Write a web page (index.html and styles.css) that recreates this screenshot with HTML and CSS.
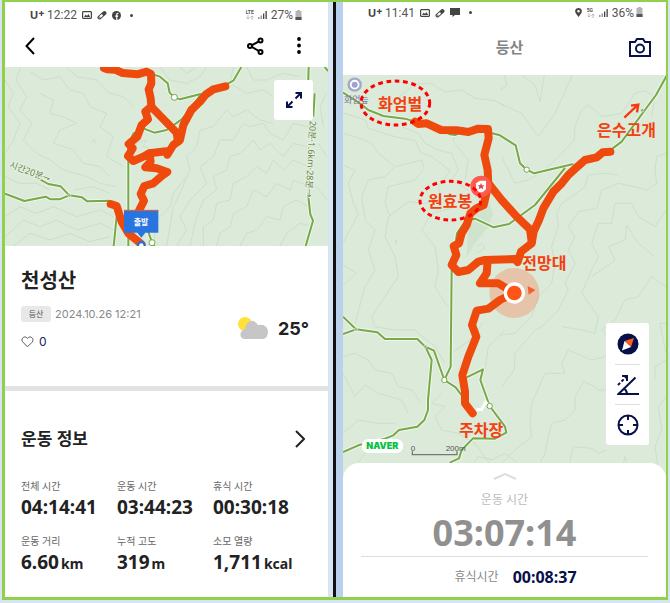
FILE: index.html
```
<!DOCTYPE html>
<html lang="ko">
<head>
  <meta charset="UTF-8">
  <meta name="viewport" content="width=device-width, initial-scale=1">
  <title>천성산 등산 기록</title>
  <link rel="stylesheet" href="styles.css">
</head>
<body>
  <svg width="0" height="0" class="defs" aria-hidden="true">
    <symbol id="i-picture" viewBox="0 0 10 10">
      <path fill="#444" fill-rule="evenodd" d="M1 1h8l1 1v6l-1 1H1L0 8V2zM1.200 2.200v5.600h7.600V2.200zM2 7l1.800-2.600L5 6l1.400-2L8.200 7z"/>
    </symbol>
    <symbol id="i-pill" viewBox="0 0 10 10">
      <path d="M2.500 7.500l5-4.500" stroke="#444" stroke-width="4" stroke-linecap="round"/>
      <path d="M2.800 7.200l2-1.800" stroke="#fff" stroke-width="2.200" stroke-linecap="round"/>
      <path d="M2.400 7.800l1-1" stroke="#777" stroke-width="1.400"/>
    </symbol>
    <symbol id="i-signal" viewBox="0 0 9 10">
      <path fill="#999" d="M0 7h1.500v2H0zM2.500 5.500H4V9H2.500z"/>
      <path fill="#444" d="M5 3.500h1.300V9H5zM7.500 1h1.300v8H7.500z"/>
    </symbol>
    <symbol id="i-battery" viewBox="0 0 7 11">
      <path fill="#b5b5b5" d="M2 0h3v1h1.500v9h-6V1H2z"/>
      <path fill="#555" d="M.5 7h6v3h-6z"/>
    </symbol>
    <symbol id="i-updown" viewBox="0 0 8 5">
      <path d="M2 0v4M.5 2.500L2 4l1.500-1.500M6 5V1M4.500 2.500L6 1l1.500 1.500" fill="none" stroke="#aaa" stroke-width=".8"/>
    </symbol>
  </svg>

  <main class="board">
    <section class="phone summary">
      <div class="status">
        <b class="carrier">U<sup>+</sup></b>
        <span>12:22</span>
        <svg class="ic" width="10" height="10"><use href="#i-picture"/></svg>
        <svg class="ic" width="10" height="10"><use href="#i-pill"/></svg>
        <svg class="ic" width="9" height="9" viewBox="0 0 10 10">
          <circle cx="5" cy="5" r="5" fill="#444"/>
          <path d="M5.300 10V4q0-1.600 1.900-1.500M3.500 5.600h3.400" fill="none" stroke="#fff" stroke-width="1.300"/>
        </svg>
        <i class="dot"></i>
        <span class="net">LTE<svg width="8" height="5"><use href="#i-updown"/></svg></span>
        <svg width="9" height="10"><use href="#i-signal"/></svg>
        <span class="charge">27%<svg width="7" height="11"><use href="#i-battery"/></svg></span>
      </div>

      <header class="topbar">
        <button class="icon-btn" aria-label="뒤로">
          <svg width="10" height="18" viewBox="0 0 10 18"><path d="M9 1L1.500 9 9 17" fill="none" stroke="#000" stroke-width="2"/></svg>
        </button>
        <button class="icon-btn share" aria-label="공유">
          <svg width="17" height="18" viewBox="0 0 17 18" fill="#fff" stroke="#000" stroke-width="2">
            <path d="M13.500 3.500L3.500 9l10 6"/>
            <circle cx="13.500" cy="3.500" r="2"/><circle cx="3" cy="9" r="2"/><circle cx="13.500" cy="15" r="2"/>
          </svg>
        </button>
        <button class="icon-btn" aria-label="더보기">
          <svg width="4" height="17" viewBox="0 0 4 17"><circle cx="2" cy="2" r="1.900"/><circle cx="2" cy="8.500" r="1.900"/><circle cx="2" cy="15" r="1.900"/></svg>
        </button>
      </header>

      <div class="map map-small">
        <svg class="canvas" viewBox="15 21 969 537" preserveAspectRatio="xMidYMin slice">
          <g class="contour">
            <path d="M62 21L48 60 80 110 60 150 96 190 70 240 110 280 150 300 190 330 260 350 300 370 350 380"/>
            <path d="M15 60L40 100 24 140 60 190 40 240 15 280"/>
            <path d="M90 35L130 60 180 50 210 90 250 100 270 140 320 160 300 200 340 230 320 290 370 320"/>
            <path d="M120 100L160 120 150 160 190 170 230 190 180 210 160 250 220 270 250 310 300 320 330 350"/>
            <path d="M200 21L230 50 290 60 330 100 370 110 400 140"/>
            <path d="M280 240L290 250M285 235L275 250"/>
            <path d="M400 280L410 250 440 240 430 260 445 262"/>
            <path d="M480 21L510 60 560 70 600 50 620 21M540 21L560 40 590 21"/>
            <path d="M700 21L690 70 740 100 790 90 820 110M740 21L760 60 800 60 850 40 900 50"/>
            <path d="M820 190L780 180 740 150 700 170 680 150 640 200 600 210 590 260 560 290 570 330 540 400 520 440 500 558"/>
            <path d="M925 200L880 190 850 240 810 220 790 190 750 200 730 190 700 240 660 240 640 290 600 320 620 370 570 420 540 470 560 510 530 558"/>
            <path d="M920 260L880 250 850 290 810 250 780 270 760 240 720 280 690 290 680 330 640 350 650 390 610 420 590 470 570 558"/>
            <path d="M925 320L880 300 850 330 820 300 800 340 770 320 740 350 700 370 690 420 650 430 640 480 610 500 610 558"/>
            <path d="M930 380L880 360 870 390 830 370 800 410 760 390 740 440 700 460 690 500 660 520 650 558"/>
            <path d="M925 440L890 420 850 440 840 480 800 470 770 510 740 520 720 558M940 500L900 490 860 520 840 558M980 100L960 140 970 200M955 250L981 290M950 380L981 420"/>
            <path d="M15 470L60 440 110 460 160 440 230 470 300 450 340 470M15 530L70 480 120 500 170 480 230 510 300 490 340 510M40 558L90 520 150 540 210 520 270 545 330 530"/>
            <path d="M15 350L60 370 110 370 150 390M220 390L280 380 330 400"/>
            <path d="M460 558L470 480 510 440 520 400 560 350"/>
          </g>
          <g class="trail halo">
            <path d="M455 42L480 50 503 70 509 98 523 112 540 118 605 101"/>
            <path d="M670 78L700 62 724 21"/>
            <path d="M385 558V255L400 220 430 205 463 218 500 210 545 178 605 101"/>
            <path d="M120 358L145 372 182 379 208 406M15 401L73 423 137 410 152 418H178L208 406 246 412 262 424 330 422 352 450 341 558M440 500L456 548 464 558"/>
            <path d="M926 21L924 90M944 100L940 170M924 400L931 463 939 482 917 558M974 21L984 33"/>
          </g>
          <g class="trail">
            <path d="M455 42L480 50 503 70 509 98 523 112 540 118 605 101"/>
            <path d="M670 78L700 62 724 21"/>
            <path d="M385 558V255L400 220 430 205 463 218 500 210 545 178 605 101"/>
            <path d="M120 358L145 372 182 379 208 406M15 401L73 423 137 410 152 418H178L208 406 246 412 262 424 330 422 352 450 341 558M440 500L456 548 464 558"/>
            <path d="M926 21L924 90M944 100L940 170M924 400L931 463 939 482 917 558M974 21L984 33"/>
          </g>
          <circle class="node" cx="523" cy="112" r="9"/>
          <circle class="node" cx="456" cy="548" r="9"/>
          <circle class="joint" cx="208" cy="406" r="5"/>
          <text class="trail-name" transform="translate(26 322) rotate(20)">시간20분⇁</text>
          <text class="trail-name" transform="translate(929 182) rotate(93)">20분·1.6km·28분→</text>
          <g class="route">
            <path d="M312 24L322 28 345 29 368 39 412 43 440 35 453 42 454 70 446 88 452 115 454 140 436 155 444 178 425 195 412 230 386 252 398 265 384 288 400 303 430 290 448 280 498 274 502 284 520 255 540 240 550 195 574 150 600 125 618 103 640 88 676 79"/>
            <path d="M454 140L530 218 534 245M448 280L452 305 436 322 470 325 502 336 488 346 460 370 433 378 422 402 432 422 418 450 405 480"/>
            <path d="M332 432L350 438 365 485 385 520 424 552"/>
          </g>
          <circle cx="424" cy="556" r="10" fill="#fff" stroke="#2a6fd6" stroke-width="7"/>
          <path d="M372 451h103v67h-39l-12 15-12-15h-40z" fill="#2874e0"/>
          <path d="M372 451h103" stroke="#f2552c" stroke-width="3"/>
          <text class="start-name" x="423" y="496">출발</text>
        </svg>
        <button class="expand" aria-label="지도 확대">
          <svg width="18" height="18" viewBox="0 0 18 18" fill="none" stroke="#07104a" stroke-width="2">
            <path d="M10.500 2H16v5.500M15.500 2.500L10.500 7.500M7.500 16H2v-5.500M2.500 15.500l5-5"/>
          </svg>
        </button>
      </div>

      <div class="info">
        <div>
          <h1>천성산</h1>
          <p class="meta"><span class="tag">등산</span><time>2024.10.26 12:21</time></p>
          <button class="like">
            <svg width="13" height="12" viewBox="0 0 13 12"><path d="M6.500 10.800L2 6.300C-.5 3.500 2.200.3 4.800 1.100q1 .3 1.700 1.400Q7.200 1.400 8.200 1.100c2.600-.8 5.300 2.400 2.800 5.200z" fill="none" stroke="#555"/></svg>
            0
          </button>
        </div>
        <div class="weather">
          <svg width="30" height="24" viewBox="0 0 30 24">
            <circle cx="7" cy="8" r="7" fill="#ffe13a"/>
            <path d="M6 23q-4-1-3.500-5T7 13q0-5 4.500-7.500T20 9q8-1.500 10 5.500 0 8-5 8.500z" fill="#c6c6c6"/>
          </svg>
          <span>25°</span>
        </div>
      </div>

      <section class="workout">
        <a href="#" class="workout-head">
          <h2>운동 정보</h2>
          <svg width="10" height="18" viewBox="0 0 10 18"><path d="M1 1l8 8-8 8" fill="none" stroke="#222" stroke-width="2"/></svg>
        </a>
        <dl class="stats">
          <div><dt>전체 시간</dt><dd>04:14:41</dd></div>
          <div><dt>운동 시간</dt><dd>03:44:23</dd></div>
          <div><dt>휴식 시간</dt><dd>00:30:18</dd></div>
          <div><dt>운동 거리</dt><dd>6.60<small>km</small></dd></div>
          <div><dt>누적 고도</dt><dd>319<small>m</small></dd></div>
          <div><dt>소모 열량</dt><dd>1,711<small>kcal</small></dd></div>
        </dl>
      </section>
    </section>

    <div class="gutter"></div>

    <section class="phone tracking">
      <div class="status">
        <b class="carrier">U<sup>+</sup></b>
        <span>11:41</span>
        <svg class="ic" width="10" height="10"><use href="#i-picture"/></svg>
        <svg class="ic" width="10" height="10"><use href="#i-pill"/></svg>
        <svg class="ic" width="10" height="9" viewBox="0 0 10 9"><path d="M0 0h10v7H5L2.500 9V7H0z" fill="#444"/></svg>
        <i class="dot"></i>
        <svg class="pin" width="7" height="9" viewBox="0 0 7 9"><path fill-rule="evenodd" d="M3.500 9L.6 5Q-.6 2 1.500.6q2-1.200 4 0Q7.600 2 6.400 5zM3.500 2a1.300 1.300 0 100 2.600 1.300 1.300 0 000-2.600z" fill="#444"/></svg>
        <span class="net">5G<svg width="8" height="5"><use href="#i-updown"/></svg></span>
        <svg width="9" height="10"><use href="#i-signal"/></svg>
        <span class="charge">36%<svg width="7" height="11"><use href="#i-battery"/></svg></span>
      </div>

      <header class="topbar">
        <h2>등산</h2>
        <button class="icon-btn camera" aria-label="사진 찍기">
          <svg width="22" height="19" viewBox="0 0 22 19" fill="none" stroke="#07104a" stroke-width="2">
            <path d="M1 4h5l2-3h6l2 3h5v14H1z"/><circle cx="11" cy="10.500" r="4"/>
          </svg>
        </button>
      </header>

      <div class="map map-live">
        <svg class="canvas" viewBox="24 15 969 1212" preserveAspectRatio="xMidYMin slice">
          <g class="contour">
            <path d="M170 100L240 42 290 40 330 66 380 60 420 85 480 92 510 110M508 15L516 45 495 60M560 15L600 45 615 95 628 15M495 100L560 130 610 200 660 130 712 15M740 120L760 104 800 140 860 130 900 70 930 62 960 80 950 140"/>
            <path d="M740 120L720 170 718 210 680 250 630 300 580 330 540 340 515 290 500 260"/>
            <path d="M24 128L90 150 100 175 180 200 240 212 260 250 290 260 345 302 310 350 320 390 270 400 220 395 160 440 150 500 180 560 190 620 150 680 110 740 120 770 180 780 240 780 300 830 330 880"/>
            <path d="M24 190L60 200 110 220 130 250 180 290 150 320 100 330 80 380 90 450 120 480 100 540 120 600 90 650 60 760"/>
            <path d="M200 170L250 190 270 220 310 240 350 250 370 300 350 330 400 360M360 190L355 215 375 240 400 270 390 330"/>
            <path d="M24 285L60 300 40 340 55 400 70 430 45 480 24 520M24 585L65 610 24 645"/>
            <path d="M180 290L260 270 268 295 240 330 160 350 150 400 165 440M350 415L290 430 260 480 300 530 310 600 300 650 330 700 350 720"/>
            <path d="M180 510L188 520M185 508L182 522M425 530L440 518 450 535 430 548 420 540"/>
            <path d="M850 315L810 310 760 315 750 350 710 380 680 400 665 430 670 470 650 530 660 580 650 640 610 680 590 740 540 790 495 795"/>
            <path d="M993 250L965 260 960 300 965 340 935 360 900 350 850 340 800 360 785 415 730 425 700 470 720 500 700 540 720 580 690 640 700 660 670 720 640 750 620 770 600 780 540 850 538 900 500 950"/>
            <path d="M993 420L960 470 910 440 890 400 840 400 830 460 790 460 770 520 790 560 770 600 740 670 790 740 780 790 740 780 680 770"/>
            <path d="M960 560L910 520 875 465 870 510 820 530 840 570 800 600 770 620M993 650L950 620 910 680 870 690 840 750 800 780 850 830 810 860 770 870 700 840 680 880 690 910 630 910 590 1000 585 1060 590 1100 540 1140 500 1180"/>
            <path d="M815 960L790 960 770 945 745 935 720 980 720 1020 690 1050 650 1060 640 1100 630 1150 610 1190M993 760L975 760 985 810 993 850M993 870L960 890 960 930M993 980L970 1010 980 1080 960 1130 970 1200M815 1140L790 1150 770 1135 715 1130 700 1200M860 1200L870 1160 880 1200"/>
            <path d="M24 860L60 850 100 870 120 900 170 910 190 950 230 960 260 1000M24 910L60 980 90 945 130 970 200 990 220 1030M320 970L290 1000 330 1010 300 1040 320 1080 370 1090 420 1120 470 1190"/>
            <path d="M355 845L420 800 440 760M24 1090L70 1050 130 1060 180 1060M60 1190L90 1150M510 780L460 830 450 900"/>
            <path d="M400 1200L430 1160 470 1170 510 1150 560 1190"/>
          </g>
          <path d="M446 350L475 430 460 470 420 520 395 560 400 470z" fill="#d0e3cc"/>
          <g class="trail halo">
            <path d="M24 68L78 102 100 120 145 138 210 146 240 155"/>
            <path d="M466 188L495 196 542 226 555 280 575 299 598 310 715 282M820 245L860 215 963 75 996 15M340 192L360 195 385 185M690 294L600 405 522 462 476 472 420 446 390 454 366 490 350 600 347 890 328 930"/>
            <path d="M24 740L63 778 127 787 150 807H247L271 830 297 842 328 930 362 952 380 976M24 792L63 778M271 830L290 870 279 990V1020L268 1050 247 1070 192 1080 175 1096 150 1106 70 1126 24 1146M395 922L444 898 436 930 464 1008 510 1070 514 1088 480 1106 414 1105 380 1140 372 1165 344 1178"/>
          </g>
          <g class="trail">
            <path d="M24 68L78 102 100 120 145 138 210 146 240 155"/>
            <path d="M466 188L495 196 542 226 555 280 575 299 598 310 715 282M820 245L860 215 963 75 996 15M340 192L360 195 385 185M690 294L600 405 522 462 476 472 420 446 390 454 366 490 350 600 347 890 328 930"/>
            <path d="M24 740L63 778 127 787 150 807H247L271 830 297 842 328 930 362 952 380 976M24 792L63 778M271 830L290 870 279 990V1020L268 1050 247 1070 192 1080 175 1096 150 1106 70 1126 24 1146M395 922L444 898 436 930 464 1008 510 1070 514 1088 480 1106 414 1105 380 1140 372 1165 344 1178"/>
          </g>
          <path d="M424 1019L440 1018 452 997 462 1006" fill="none" stroke="#fff" stroke-width="9"/>
          <circle class="node" cx="575" cy="299" r="8"/>
          <circle class="node" cx="328" cy="930" r="8"/>
          <circle class="node" cx="464" cy="1008" r="8"/>
          <circle class="joint" cx="63" cy="778" r="5"/>
          <circle class="joint" cx="271" cy="830" r="5"/>
          <circle class="joint" cx="922" cy="121" r="5"/>
          <circle cx="59" cy="44" r="18" fill="#fff" stroke="#a3a7cd" stroke-width="7"/>
          <circle cx="59" cy="44" r="9" fill="#9ea3cf"/>
          <text class="place" x="27" y="99">화엄늪</text>

          <circle cx="538" cy="669" r="75" fill="#f28c62" opacity=".4"/>
          <g class="route">
            <path d="M240 155L250 162 275 160 318 180 365 181 400 186 430 176 459 177 461 205 448 255 458 300 460 345 446 405 424 415 406 430 395 465 380 490 372 520 356 528 364 555 350 585 370 606 400 600 430 575 450 570 540 567 548 576 558 545 590 520 596 485 612 450 625 415 655 365 680 340 700 315 722 295 750 270 785 262 803 247 826 245"/>
            <path d="M460 340L500 390 545 440 585 478 590 515M458 572L455 610 435 640 490 640 538 669 495 690 460 716 425 722 411 765 424 800 400 860 382 915 390 965 390 1000 413 1030"/>
          </g>
          <circle cx="538" cy="669" r="27" fill="#ff5518" stroke="#fff" stroke-width="10"/>
          <path d="M578 648l23 12-20 14z" fill="#f4602c"/>

          <circle cx="438" cy="349" r="32" fill="#fa5c50"/>
          <path d="M423 340L435 332H453V358L443 367H433L423 358z" fill="#fff"/>
          <path d="M438 339l3 7h7l-5 5 2 7-7-4-7 4 2-7-5-5h7z" fill="#e8443c"/>

          <ellipse class="mark" cx="181" cy="99" rx="103" ry="66"/>
          <ellipse class="mark" cx="346" cy="392" rx="91" ry="58"/>
          <path d="M868 143L905 108M888 107l22-3-4 23" fill="none" stroke="#f8380c" stroke-width="7"/>
          <text class="spot" x="129" y="119">화엄벌</text>
          <text class="spot" x="279" y="410">원효봉</text>
          <text class="spot" x="786" y="199">은수고개</text>
          <text class="spot" x="562" y="597">전망대</text>
          <text class="spot" x="372" y="1097">주차장</text>

          <rect x="80" y="1107" width="125" height="42" rx="21" fill="#fff"/>
          <text class="naver" x="142" y="1138">NAVER</text>
          <path d="M232 1144V1154H366V1144" fill="none" stroke="#777" stroke-width="4"/>
          <text class="scale" x="227" y="1143">0</text>
          <text class="scale" x="332" y="1143">200m</text>
        </svg>
        <div class="tools">
          <button aria-label="나침반">
            <svg width="22" height="22" viewBox="0 0 22 22"><circle cx="11" cy="11" r="10.500" fill="#07104a"/><path d="M17 5L7.500 8l6.500 6z" fill="#ff5a22"/><path d="M5 17.500L7.500 8l6.500 6z" fill="#fff"/></svg>
          </button>
          <button aria-label="경사">
            <svg width="22" height="22" viewBox="0 0 22 22" fill="none" stroke="#07104a" stroke-width="2"><path d="M22 20H1.500L18.500 3.500M7 14.500q3 2 3 5.500"/><path d="M1 11l8-8" stroke-dasharray="3 2"/><path d="M5 2h5v5"/></svg>
          </button>
          <button aria-label="현재 위치">
            <svg width="22" height="22" viewBox="0 0 22 22" fill="none" stroke="#07104a" stroke-width="2"><circle cx="11" cy="11" r="9.500"/><path d="M11 1v5M11 16v5M1 11h5M16 11h5"/></svg>
          </button>
        </div>
      </div>

      <div class="sheet">
        <button class="grip" aria-label="펼치기">
          <svg width="24" height="7" viewBox="0 0 24 7"><path d="M1 6l11-5 11 5" fill="none" stroke="#ddd" stroke-width="2"/></svg>
        </button>
        <p class="sheet-label">운동 시간</p>
        <p class="elapsed">03:07:14</p>
        <p class="rest"><span>휴식시간</span><b>00:08:37</b></p>
      </div>
    </section>
  </main>
</body>
</html>
```

FILE: styles.css
```
* {
  box-sizing: border-box;
}

body {
  margin: 0;
  background: #d7e5f3;
  color: #222;
  font-family: "Noto Sans", "Noto Sans CJK KR", sans-serif;
}

h1, h2, p, dl, dd {
  margin: 0;
}

button {
  padding: 0;
  border: 0;
  background: none;
  font: inherit;
  color: inherit;
  cursor: pointer;
}

svg {
  display: block;
  flex: none;
}

.defs {
  position: absolute;
}

.board {
  display: grid;
  grid-template-columns: 1fr 15px 1fr;
  min-height: calc(100vh - 3px);
  margin: 0 2px 3px;
  border: solid #8fd04c;
  border-width: 2px 2px 3px 3px;
}

.gutter {
  background: #b9d1eb;
  border-left: 5px solid #d7e5f3;
  box-shadow: inset 3px 0 #111;
}

.phone {
  display: flex;
  flex-direction: column;
  min-width: 0;
  background: #fff;
}

/* status bar */
.status {
  display: flex;
  align-items: center;
  height: 26px;
  padding: 0 26px 0 25px;
  font-family: Roboto, sans-serif;
  font-size: 12px;
  color: #555;
}

.carrier {
  width: 17px;
  font-family: Inter, sans-serif;
  font-size: 11px;
  line-height: 12px;
  color: #444;
}

.carrier sup {
  font-size: 10px;
  line-height: 0;
  vertical-align: 3px;
}

.ic {
  margin-left: 5px;
}

.dot {
  width: 3px;
  height: 3px;
  margin: 0 auto 0 9px;
  border-radius: 50%;
  background: #444;
}

.pin {
  margin-right: 5px;
}

.net {
  width: 12px;
  font-size: 5px;
  font-weight: 700;
  line-height: 5px;
}

.charge {
  display: flex;
  align-items: center;
  gap: 2px;
  margin-left: 4px;
}

.tracking .status {
  height: 21px;
  padding-right: 23px;
}

/* title bars */
.topbar {
  display: flex;
  align-items: center;
  height: 39px;
  padding: 0 27px 4px 20px;
}

.share {
  margin: 0 33px 0 auto;
}

.tracking .topbar {
  display: grid;
  grid-template-columns: 1fr auto 1fr;
  height: 52px;
  padding: 0 15px 4px;
}

.tracking h2 {
  grid-column: 2;
  margin-left: 10px;
  font-size: 15px;
  font-weight: 700;
  line-height: 20px;
  color: #858585;
}

.camera {
  justify-self: end;
}

/* maps */
.map {
  position: relative;
  overflow: hidden;
  background: #dcead9;
}

.map-small {
  height: 179px;
}

.map-live {
  flex: 1;
  min-height: 320px;
  margin-bottom: -16px;
}

.canvas {
  position: absolute;
  width: 100%;
  height: 100%;
}

.contour {
  fill: none;
  stroke: #c6d8c4;
  stroke-width: 2;
  stroke-linejoin: round;
}

.trail {
  fill: none;
  stroke: #77a84a;
  stroke-width: 6;
  stroke-linejoin: round;
}

.trail.halo {
  stroke: #eff6ea;
  stroke-width: 12;
}

.route {
  fill: none;
  stroke: #ee4a0d;
  stroke-width: 24;
  stroke-linecap: round;
  stroke-linejoin: round;
}

.node {
  fill: #fff;
  stroke: #77a84a;
  stroke-width: 3;
}

.joint {
  fill: #8fae85;
  stroke: #dcead9;
  stroke-width: 2;
}

.mark {
  fill: none;
  stroke: #f00;
  stroke-width: 9;
  stroke-dasharray: 14 11;
}

.trail-name {
  font-size: 27px;
  fill: #5f8145;
  stroke: #eff6ea;
  stroke-width: 4;
  paint-order: stroke;
}

.start-name {
  font-size: 24px;
  font-weight: 700;
  text-anchor: middle;
  fill: #fff;
}

.place {
  font-size: 27px;
  fill: #73739c;
}

.spot {
  font-size: 48px;
  font-weight: 700;
  fill: #f4400f;
}

.naver {
  font-family: Inter, sans-serif;
  font-size: 27px;
  font-weight: 900;
  text-anchor: middle;
  fill: #03c23f;
}

.scale {
  font-family: "Liberation Sans", sans-serif;
  font-size: 24px;
  fill: #555;
}

.expand {
  position: absolute;
  top: 13px;
  right: 15px;
  display: grid;
  place-items: center;
  width: 39px;
  height: 40px;
  border-radius: 3px;
  background: #fff;
}

.tools {
  position: absolute;
  right: 17px;
  bottom: 34px;
  width: 43px;
  padding: 1px 9px;
  border-radius: 3px;
  background: #fff;
}

.tools button {
  display: grid;
  place-items: center;
  width: 100%;
  height: 40px;
}

.tools button + button {
  border-top: 1px solid #ddd;
}

/* summary */
.info {
  display: flex;
  justify-content: space-between;
  height: 140px;
  padding: 20px 19px 0 16px;
}

h1 {
  font-size: 20px;
  line-height: 30px;
}

.meta {
  display: flex;
  align-items: center;
  gap: 4px;
  margin-top: 10px;
  font-family: Inter, sans-serif;
  font-size: 11px;
  line-height: 16px;
  color: #888;
}

.tag {
  width: 30px;
  border-radius: 3px;
  background: #e8e8e8;
  font-family: "Noto Sans CJK KR", sans-serif;
  font-size: 8px;
  text-align: center;
  color: #555;
}

.like {
  display: flex;
  align-items: center;
  gap: 5px;
  margin-top: 12px;
  font-family: Inter, sans-serif;
  font-size: 12px;
  line-height: 16px;
  color: #1b2260;
}

.weather {
  display: flex;
  align-items: center;
  gap: 10px;
  height: 24px;
  margin-top: 50px;
  font-family: Inter, sans-serif;
  font-size: 18px;
  font-weight: 700;
}

.workout {
  padding: 36px 19px 20px 16px;
  border-top: 5px solid #e2e2e2;
}

.workout-head {
  display: flex;
  align-items: center;
  justify-content: space-between;
  padding-right: 4px;
  color: inherit;
  text-decoration: none;
}

.workout-head h2 {
  font-size: 17px;
  line-height: 24px;
}

.stats {
  display: grid;
  grid-template-columns: repeat(3, 1fr);
  row-gap: 13px;
  margin-top: 27px;
  white-space: nowrap;
}

.stats dt {
  font-size: 10px;
  line-height: 16px;
  color: #666;
}

.stats dd {
  font-size: 19px;
  font-weight: 700;
  line-height: 26px;
}

.stats small {
  margin-left: 2px;
  font-size: 14px;
}

/* tracking sheet */
.sheet {
  position: relative;
  display: flex;
  flex-direction: column;
  padding: 8px 18px 0;
  border-radius: 16px 16px 0 0;
  background: #fff;
  text-align: center;
}

.grip {
  align-self: center;
  height: 10px;
}

.sheet-label {
  margin-top: 11px;
  font-size: 12px;
  line-height: 16px;
  color: #bbb;
}

.elapsed {
  margin-top: 2px;
  border-bottom: 1px solid #ddd;
  font-size: 36px;
  font-weight: 700;
  line-height: 46px;
  color: #909090;
}

.rest {
  display: flex;
  justify-content: center;
  gap: 14px;
  padding: 10px 0 10px 22px;
  font-size: 12px;
  line-height: 20px;
  color: #888;
}

.rest b {
  font-size: 16px;
  color: #07104a;
}
```
